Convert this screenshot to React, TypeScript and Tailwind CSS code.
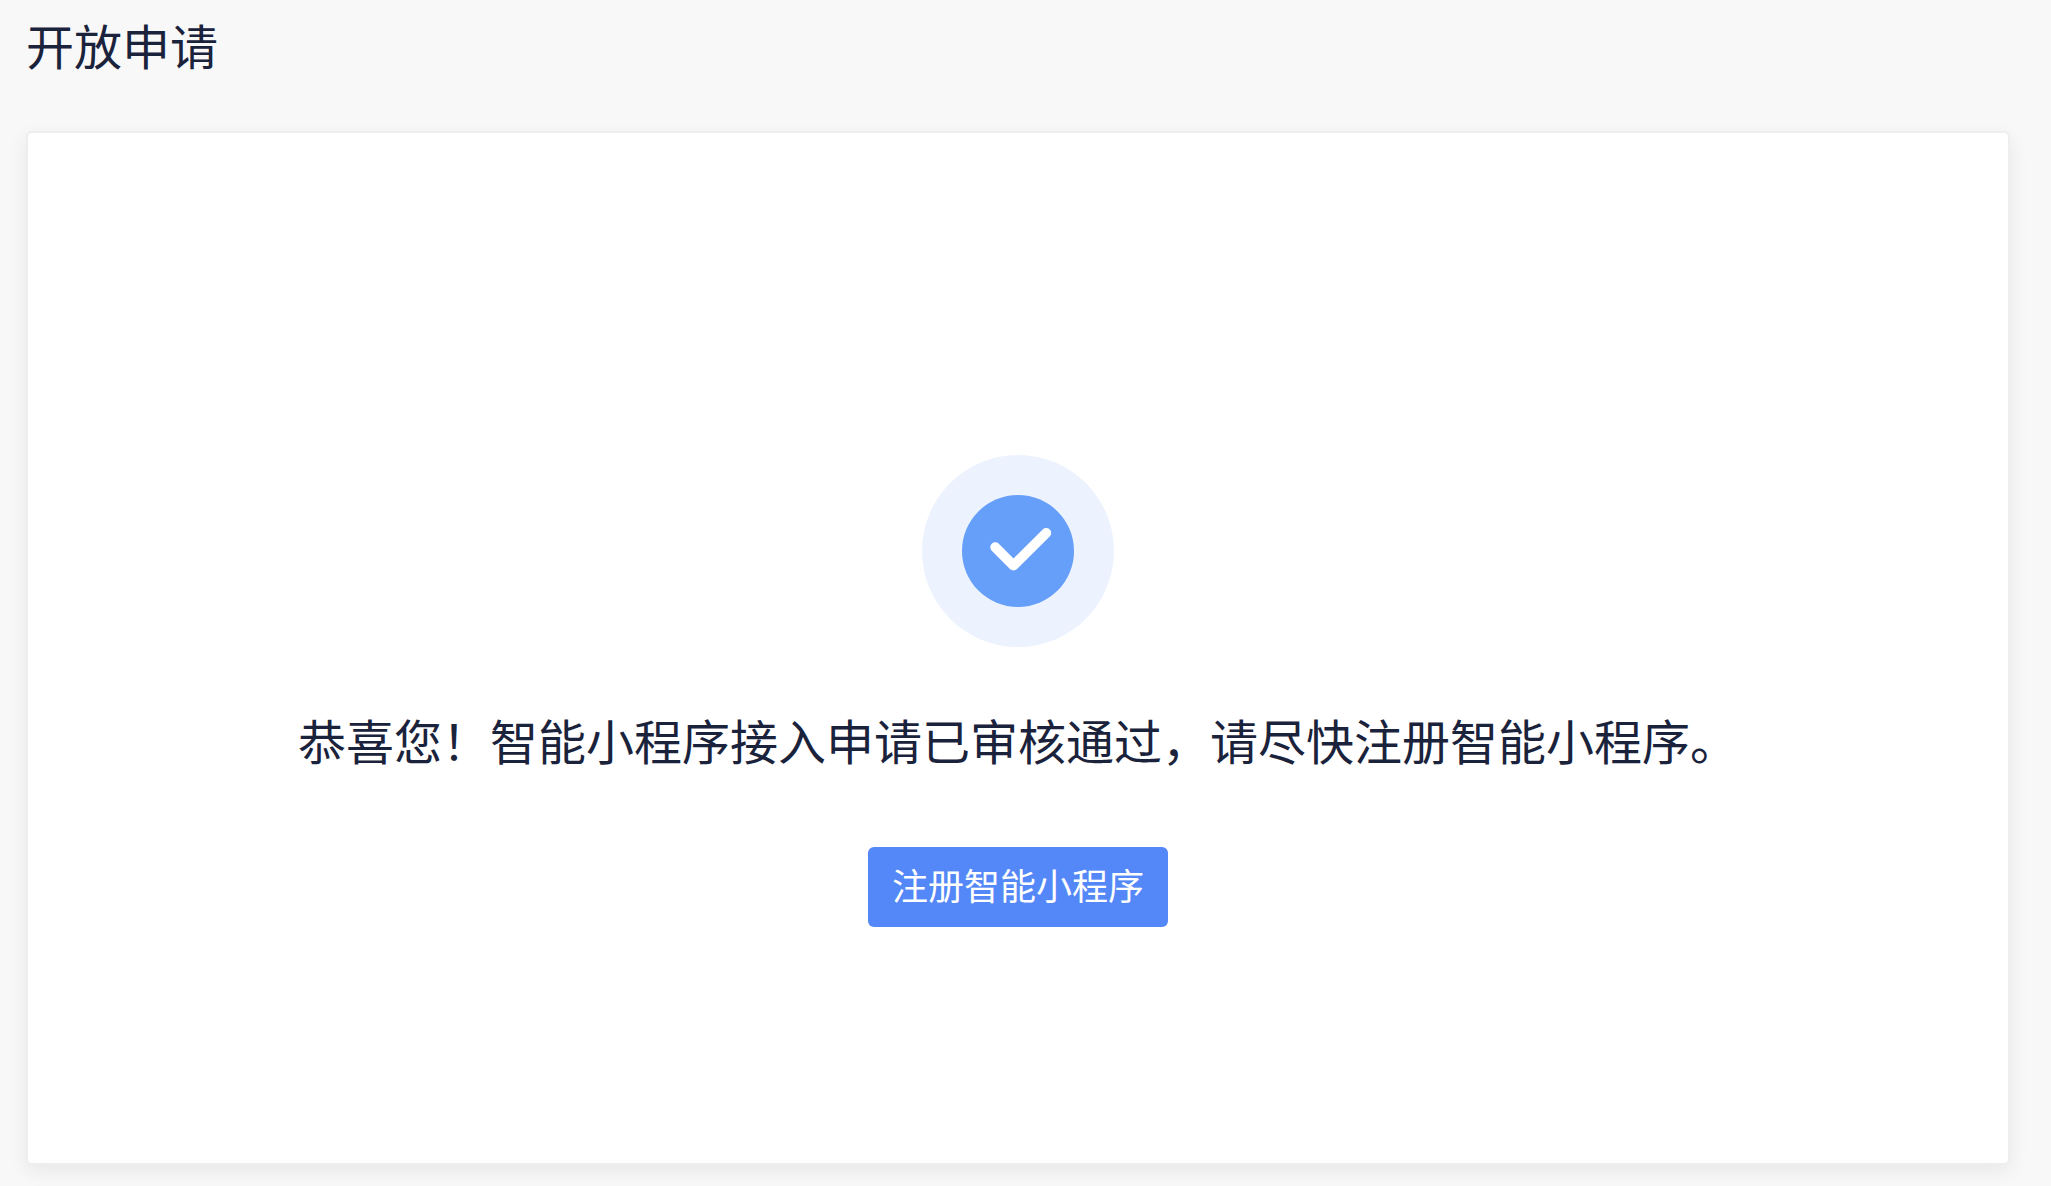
import React from 'react';

const FONT = "font-['Noto_Sans_CJK_SC',sans-serif]";

const SuccessIcon: React.FC = () => (
  <svg className="w-48 h-48" viewBox="0 0 192 192" fill="none" aria-hidden="true">
    <circle cx="96" cy="96" r="96" fill="#ecf2fe" />
    <circle cx="96" cy="96" r="56" fill="#669ff9" />
    <path
      d="M73.3 92.3L91.5 110.5L124.2 78"
      stroke="#fff"
      strokeWidth="10"
      strokeLinecap="round"
      strokeLinejoin="round"
    />
  </svg>
);

interface ResultCardProps {
  message: string;
  action: string;
}

const ResultCard: React.FC<ResultCardProps> = ({ message, action }) => (
  <section className="flex flex-col items-center rounded-md border-2 border-[#eeeeee] bg-white px-6 pt-[322px] pb-[236px] shadow-[0_6px_20px_rgba(0,0,0,0.07)]">
    <SuccessIcon />
    <p className="mt-[60px] text-center text-5xl leading-[64px]">{message}</p>
    <button
      type="button"
      className="mt-[76px] h-20 cursor-pointer rounded-md bg-[#5487f7] px-6 pb-1.5 text-4xl text-white"
    >
      {action}
    </button>
  </section>
);

const App: React.FC = () => {
  return (
    <main className={`min-h-screen bg-[#f8f8f8] pt-3 pr-[41px] pb-5 pl-[26px] text-[#1a233b] ${FONT}`}>
      <h1 className="mb-[55px] text-5xl leading-[64px]">开放申请</h1>
      <ResultCard
        message="恭喜您！智能小程序接入申请已审核通过，请尽快注册智能小程序。"
        action="注册智能小程序"
      />
    </main>
  );
};

export default App;
